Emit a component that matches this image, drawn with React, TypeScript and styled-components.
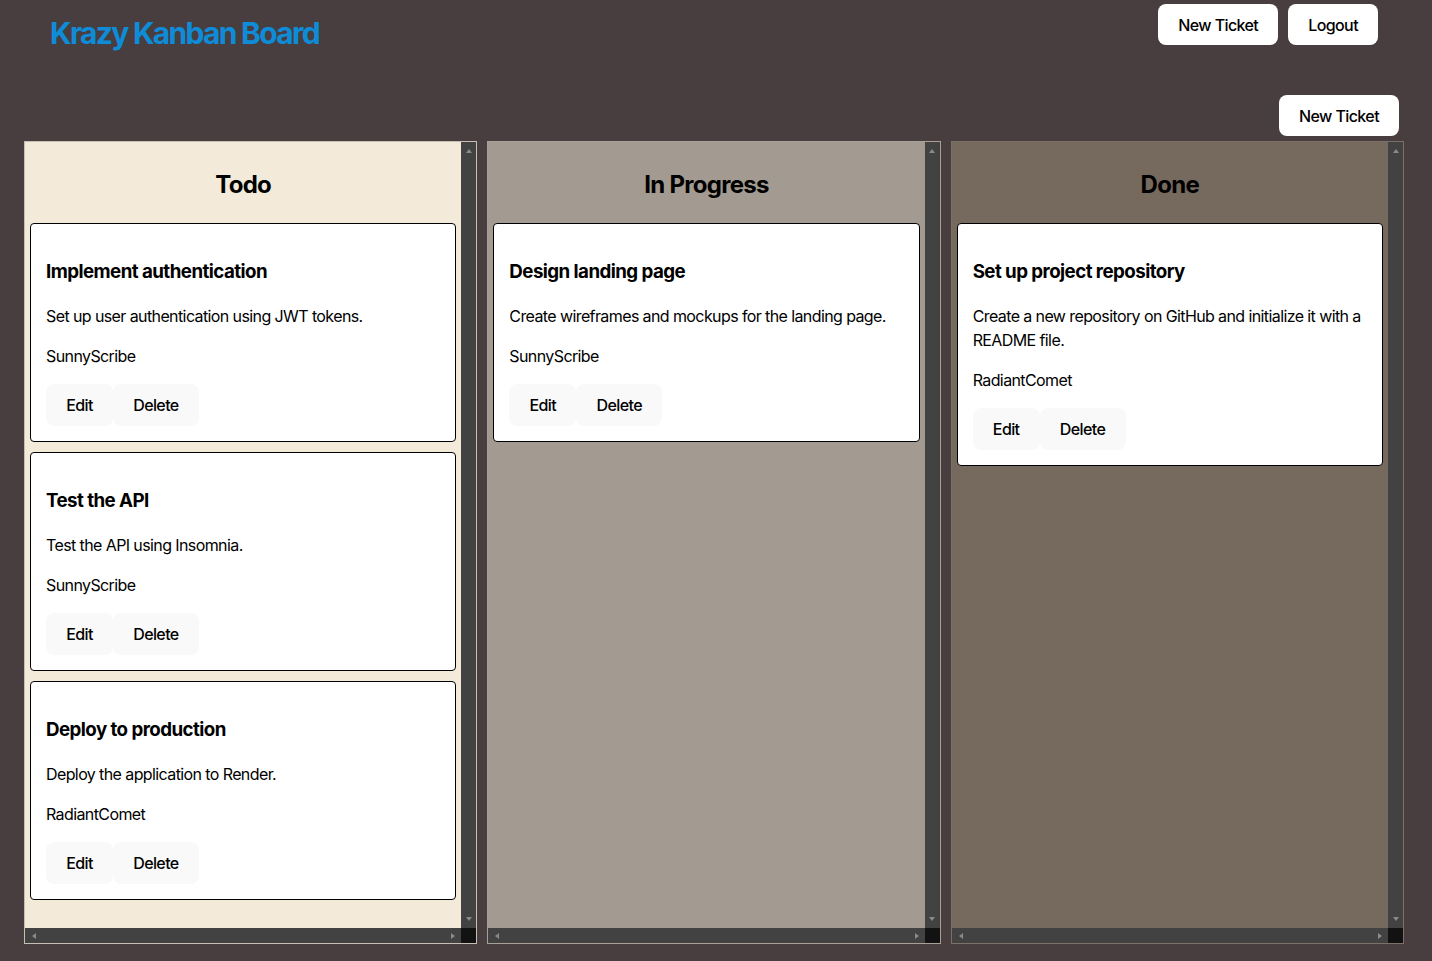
import React from "react";
import styled, { createGlobalStyle, css } from "styled-components";

const GlobalStyle = createGlobalStyle`
  html, body {
    margin: 0;
    padding: 0;
    background: #483e40;
    overflow: hidden;
  }
  body {
    font-family: Inter, "Noto Sans", sans-serif;
    color: #000;
    -webkit-font-smoothing: antialiased;
  }
  * { box-sizing: border-box; }
`;

const ARROW = "#8a8a8a";

const Page = styled.div`
  width: 1432px;
  height: 961px;
  display: flex;
  flex-direction: column;
`;

const Header = styled.header`
  display: flex;
  justify-content: space-between;
  align-items: flex-start;
  padding: 0 54px 0 50px;
`;

const Brand = styled.h1`
  margin: 17px 0 0 0;
  font-size: 30px;
  line-height: 33px;
  font-weight: 700;
  letter-spacing: -1.7px;
  color: #0e8cd8;
`;

const Nav = styled.nav`
  display: flex;
  gap: 10px;
  margin-top: 4px;
`;

const Button = styled.button<{ $variant?: "white" | "light" }>`
  font-family: Inter, "Noto Sans", sans-serif;
  font-size: 16px;
  font-weight: 500;
  line-height: 24px;
  letter-spacing: -0.6px;
  padding: ${(p) => (p.$variant === "light" ? "8px 19.2px" : "7.5px 19px")};
  border: 1px solid transparent;
  border-radius: 8px;
  background: ${(p) => (p.$variant === "light" ? "#f9f9f9" : "#ffffff")};
  color: #000;
  cursor: pointer;
`;

const Toolbar = styled.div`
  display: flex;
  justify-content: flex-end;
  padding-right: 33px;
  margin-top: 45px;
`;

const Board = styled.main`
  display: grid;
  grid-template-columns: repeat(3, 1fr);
  gap: 10px;
  padding: 0 28px 0 24px;
  margin-top: 5px;
`;

const Column = styled.section<{ $bg: string; $border: string }>`
  height: 803px;
  display: grid;
  grid-template-columns: minmax(0, 1fr) 15px;
  grid-template-rows: minmax(0, 1fr) 15px;
  background: ${(p) => p.$bg};
  border: 1px solid ${(p) => p.$border};
  color: #000;
`;

const ColumnBody = styled.div`
  padding: 5px;
  overflow: hidden;
  min-height: 0;
`;

const VBar = styled.div`
  background: #424242;
  display: flex;
  flex-direction: column;
  justify-content: space-between;
  align-items: center;
  padding: 7px 0 7px;
`;

const HBar = styled.div`
  background: #424242;
  display: flex;
  justify-content: space-between;
  align-items: center;
  padding: 0 6px 0 7px;
`;

const Corner = styled.div`
  background: #121212;
`;

const Arrow = styled.span<{ $dir: "up" | "down" | "left" | "right" }>`
  display: block;
  width: 0;
  height: 0;
  ${(p) =>
    p.$dir === "up"
      ? css`
          border-left: 3.5px solid transparent;
          border-right: 3.5px solid transparent;
          border-bottom: 4px solid ${ARROW};
        `
      : p.$dir === "down"
      ? css`
          border-left: 3.5px solid transparent;
          border-right: 3.5px solid transparent;
          border-top: 4px solid ${ARROW};
        `
      : p.$dir === "left"
      ? css`
          border-top: 3.5px solid transparent;
          border-bottom: 3.5px solid transparent;
          border-right: 4px solid ${ARROW};
        `
      : css`
          border-top: 3.5px solid transparent;
          border-bottom: 3.5px solid transparent;
          border-left: 4px solid ${ARROW};
        `}
`;

const ColumnTitle = styled.h2`
  margin: 19.92px 0;
  font-size: 24px;
  line-height: 36px;
  font-weight: 700;
  letter-spacing: -0.72px;
  text-align: center;
  color: #000;
`;

const CardList = styled.div`
  display: flex;
  flex-direction: column;
  gap: 9.6px;
`;

const Card = styled.article`
  background: #fff;
  border: 1px solid #000;
  border-radius: 4px;
  padding: 15px;
`;

const CardTitle = styled.h3`
  margin: 18.72px 0;
  font-size: 18.72px;
  line-height: 28px;
  font-weight: 700;
  letter-spacing: -0.55px;
  color: #000;
`;

const CardText = styled.p`
  margin: 16px 0;
  font-size: 16px;
  line-height: 24px;
  letter-spacing: -0.6px;
  color: #000;
`;

const Actions = styled.div`
  display: flex;
`;

type Ticket = { title: string; desc: string; author: string };

const columns: {
  name: string;
  bg: string;
  border: string;
  tickets: Ticket[];
}[] = [
  {
    name: "Todo",
    bg: "#f3ead9",
    border: "#c6beb3",
    tickets: [
      {
        title: "Implement authentication",
        desc: "Set up user authentication using JWT tokens.",
        author: "SunnyScribe",
      },
      {
        title: "Test the API",
        desc: "Test the API using Insomnia.",
        author: "SunnyScribe",
      },
      {
        title: "Deploy to production",
        desc: "Deploy the application to Render.",
        author: "RadiantComet",
      },
    ],
  },
  {
    name: "In Progress",
    bg: "#a39a91",
    border: "#a8a097",
    tickets: [
      {
        title: "Design landing page",
        desc: "Create wireframes and mockups for the landing page.",
        author: "SunnyScribe",
      },
    ],
  },
  {
    name: "Done",
    bg: "#76695e",
    border: "#7d7066",
    tickets: [
      {
        title: "Set up project repository",
        desc: "Create a new repository on GitHub and initialize it with a README file.",
        author: "RadiantComet",
      },
    ],
  },
];

export default function App() {
  return (
    <Page>
      <GlobalStyle />
      <Header>
        <Brand>Krazy Kanban Board</Brand>
        <Nav>
          <Button>New Ticket</Button>
          <Button>Logout</Button>
        </Nav>
      </Header>
      <Toolbar>
        <Button>New Ticket</Button>
      </Toolbar>
      <Board>
        {columns.map((col) => (
          <Column key={col.name} $bg={col.bg} $border={col.border}>
            <ColumnBody>
              <ColumnTitle>{col.name}</ColumnTitle>
              <CardList>
                {col.tickets.map((t) => (
                  <Card key={t.title}>
                    <CardTitle>{t.title}</CardTitle>
                    <CardText>{t.desc}</CardText>
                    <CardText>{t.author}</CardText>
                    <Actions>
                      <Button $variant="light">Edit</Button>
                      <Button $variant="light">Delete</Button>
                    </Actions>
                  </Card>
                ))}
              </CardList>
            </ColumnBody>
            <VBar>
              <Arrow $dir="up" />
              <Arrow $dir="down" />
            </VBar>
            <HBar>
              <Arrow $dir="left" />
              <Arrow $dir="right" />
            </HBar>
            <Corner />
          </Column>
        ))}
      </Board>
    </Page>
  );
}
